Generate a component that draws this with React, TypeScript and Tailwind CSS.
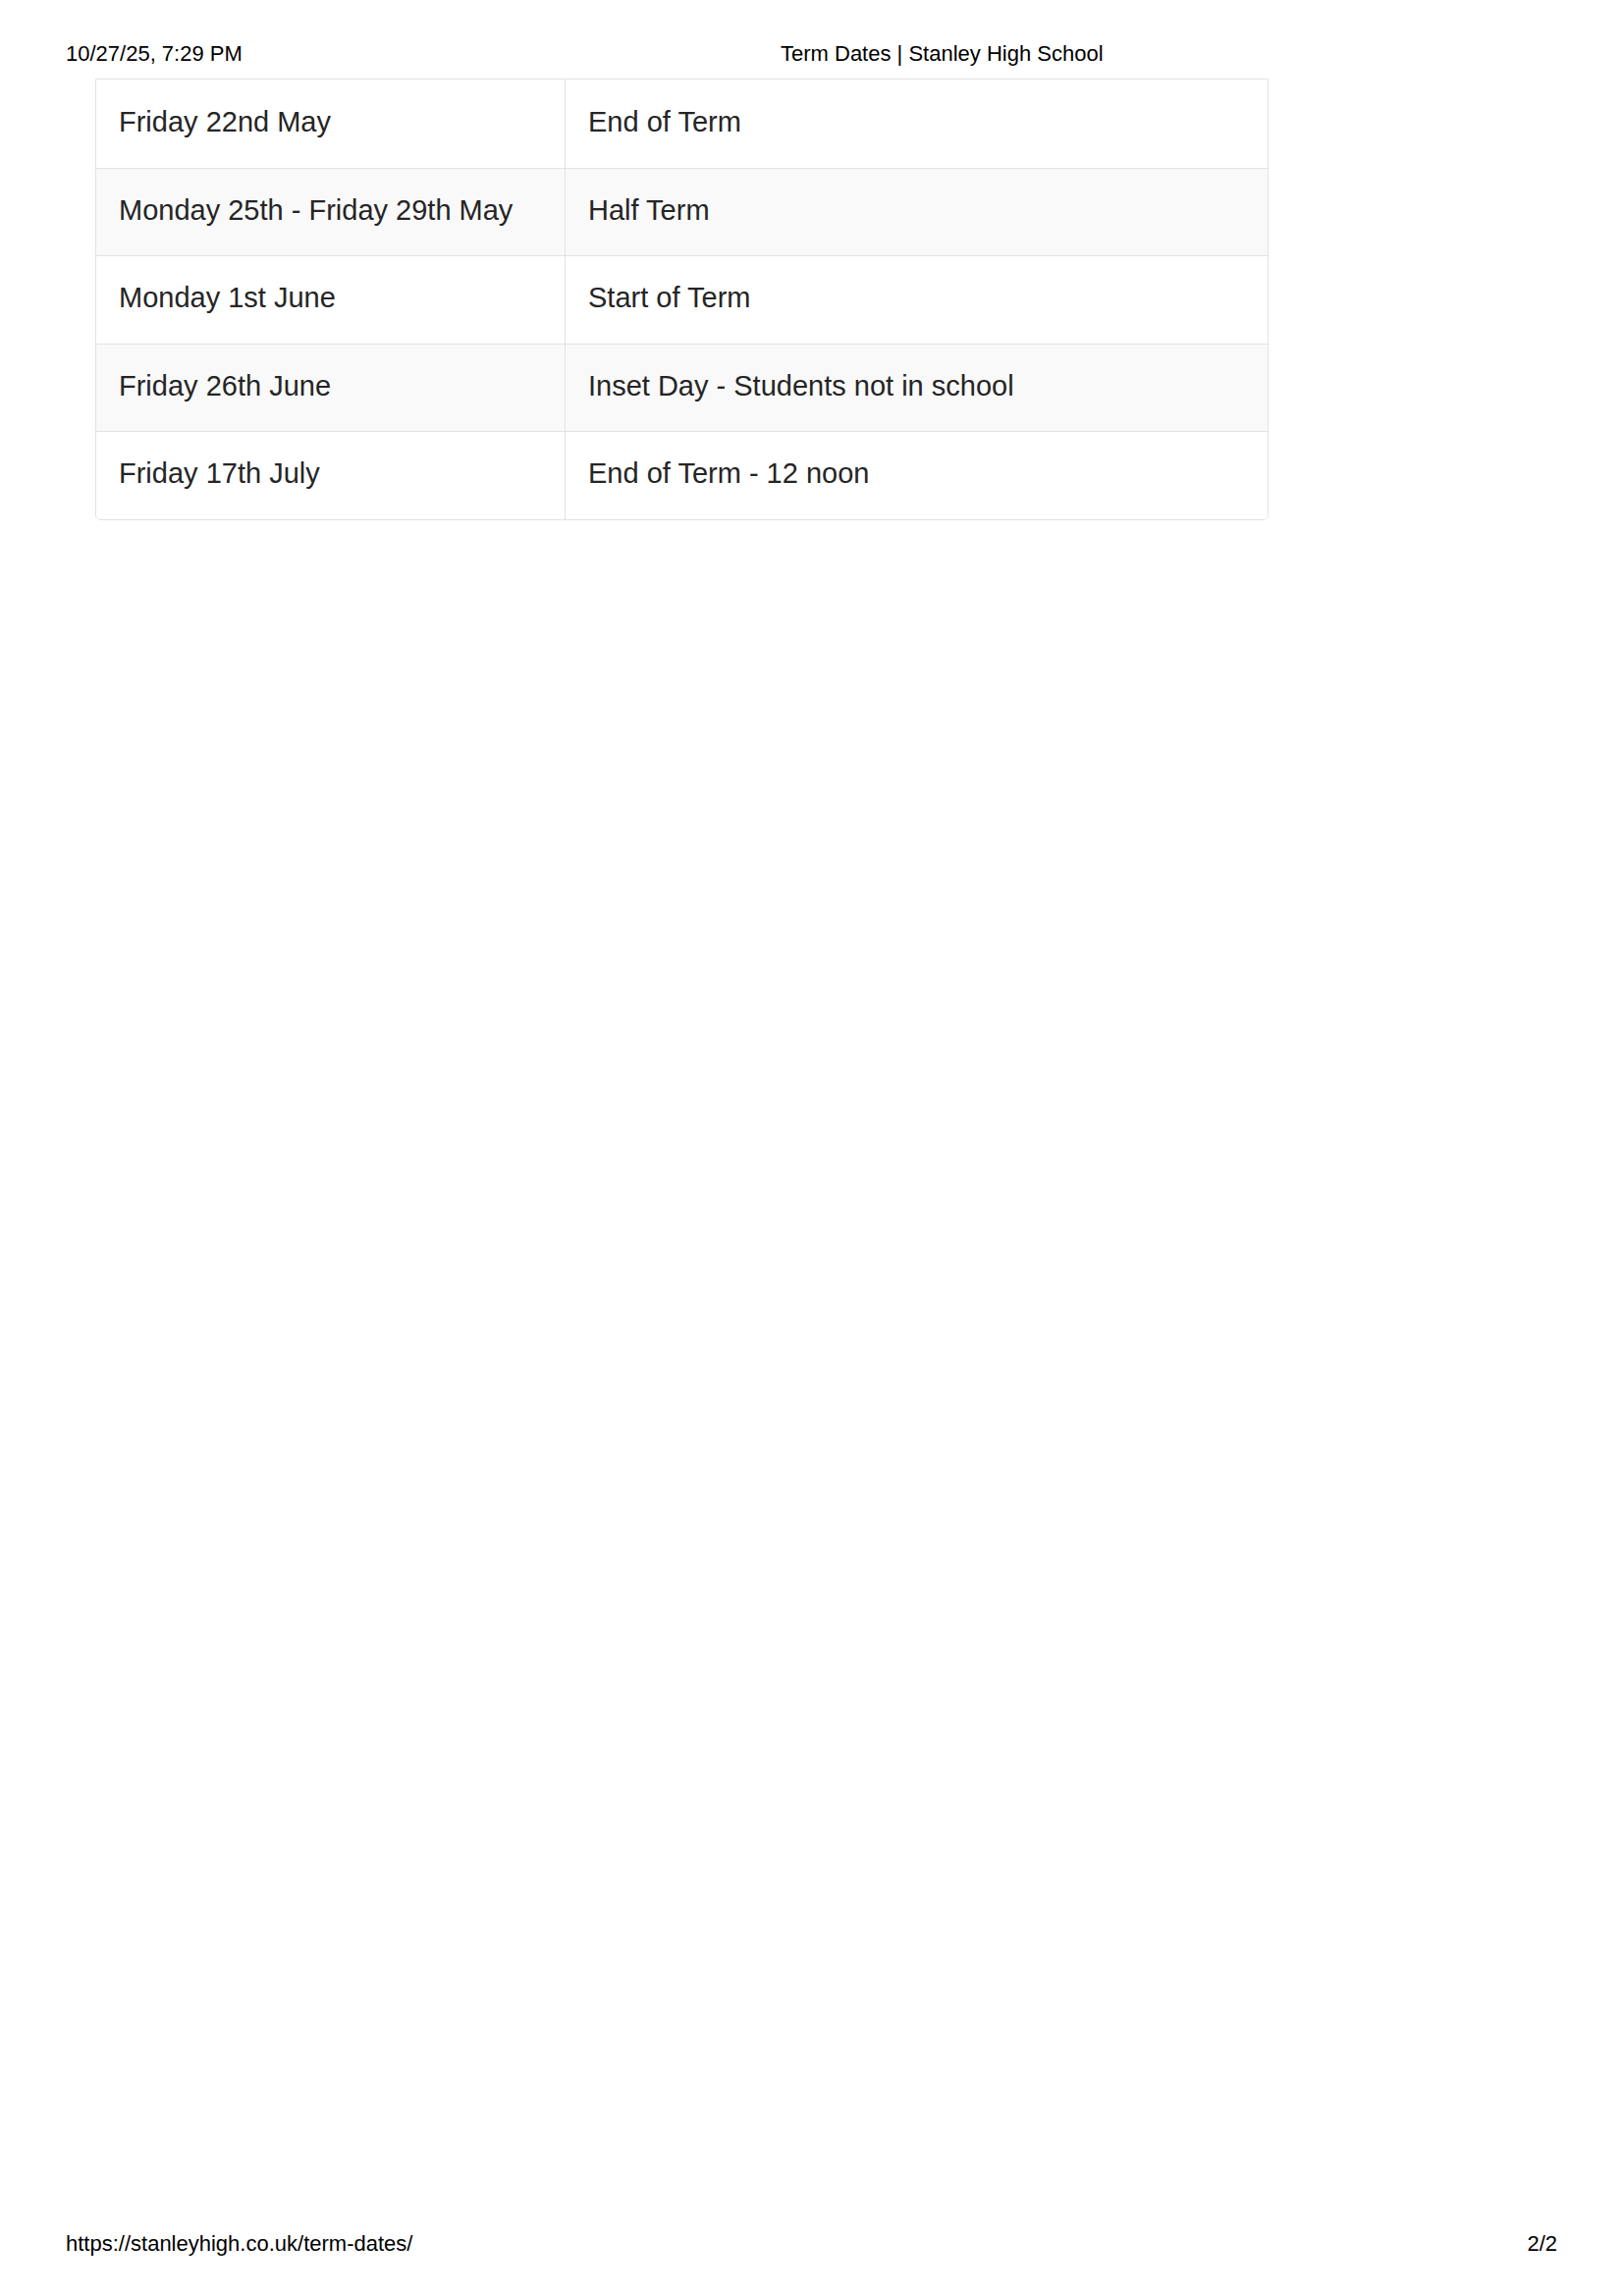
import React from "react";

const rows: [string, string][] = [
  ["Friday 22nd May", "End of Term"],
  ["Monday 25th - Friday 29th May", "Half Term"],
  ["Monday 1st June", "Start of Term"],
  ["Friday 26th June", "Inset Day - Students not in school"],
  ["Friday 17th July", "End of Term - 12 noon"],
];

export default function App() {
  return (
    <div
      className="relative w-[1653px] h-[2339px] bg-white text-black"
      style={{ fontFamily: '"Liberation Sans", Arial, sans-serif' }}
    >
      <div className="flex pl-[67px] pt-[40px] text-[22px] leading-[30px]">
        <div className="w-[728px]">10/27/25, 7:29 PM</div>
        <div>Term Dates | Stanley High School</div>
      </div>
      <div className="ml-[97px] mt-[10px] w-[1195px] border border-[#e2e2e2] rounded-b-[5px] overflow-hidden text-[29px] text-[#252525]">
        {rows.map(([a, b], i) => (
          <div
            key={i}
            className={`grid grid-cols-[478px_1fr] h-[89.5px] ${i > 0 ? "border-t border-[#e2e2e2]" : ""} ${i % 2 === 1 ? "bg-[#f9f9f9]" : "bg-white"}`}
          >
            <div className="flex items-center pl-[23px] pb-[3px] border-r border-[#e2e2e2]">{a}</div>
            <div className="flex items-center pl-[23px] pb-[3px]">{b}</div>
          </div>
        ))}
      </div>
      <div className="absolute left-0 right-0 top-[2271px] flex justify-between px-[67px] text-[22px] leading-[30px]">
        <div>https://stanleyhigh.co.uk/term-dates/</div>
        <div>2/2</div>
      </div>
    </div>
  );
}
